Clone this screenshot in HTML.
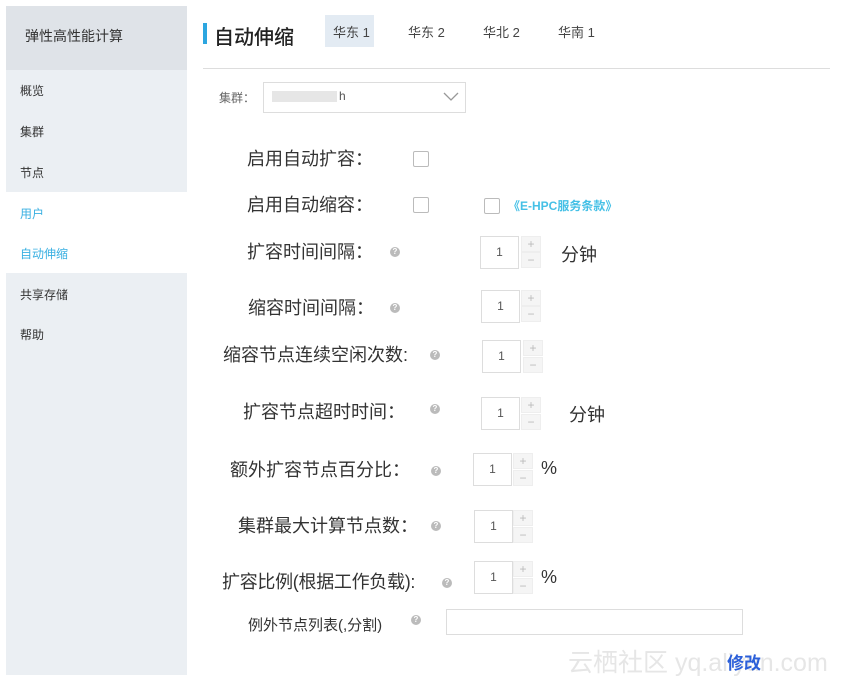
<!DOCTYPE html>
<html><head><meta charset="utf-8"><style>
*{margin:0;padding:0;box-sizing:border-box}
body{width:864px;height:681px;background:#fff;position:relative;overflow:hidden;font-family:"Liberation Sans","Noto Sans CJK SC",sans-serif;color:#333}
.a{position:absolute;white-space:nowrap}
.lbl{font-size:18px;color:#333;line-height:20px}
.q{position:absolute;width:10px;height:10px;border-radius:50%;background:#bbb;color:#fff;font-size:8px;line-height:10px;text-align:center;font-weight:bold}
.inp{position:absolute;width:39px;height:33px;border:1px solid #ddd;font-size:12px;text-align:center;color:#555;background:#fff}
.pm{position:absolute;width:20px;height:16px;background:#f5f5f5;border:1px solid #eee;color:#bbb;font-size:12px;line-height:14px;text-align:center}
.cb{position:absolute;width:16px;height:16px;border:1px solid #bbb;border-radius:2px;background:#fff}
.side div{position:absolute;left:20px;font-size:12px;color:#333}
</style></head><body>
<div class="a" style="left:6px;top:6px;width:181px;height:64px;background:#dfe3e8"></div>
<div class="a" style="left:6px;top:70px;width:181px;height:122px;background:#ebeff3"></div>
<div class="a" style="left:6px;top:273px;width:181px;height:402px;background:#ebeff3"></div>
<div class="a" style="left:25px;top:26px;font-size:14px;color:#333">弹性高性能计算</div>
<div class="side">
<div style="top:82px">概览</div>
<div style="top:123px">集群</div>
<div style="top:164px">节点</div>
<div style="top:205px;color:#3ab0e2">用户</div>
<div style="top:245px;color:#3ab0e2">自动伸缩</div>
<div style="top:286px">共享存储</div>
<div style="top:326px">帮助</div>
</div>
<div class="a" style="left:203px;top:23px;width:4px;height:21px;background:#2ca6e0"></div>
<div class="a" style="left:214px;top:21px;font-size:20px;color:#222;font-weight:500">自动伸缩</div>
<div class="a" style="left:325px;top:15px;width:49px;height:32px;background:#e3ebf3"></div>
<div class="a" style="left:333px;top:22px;font-size:13px;color:#444">华东 1</div>
<div class="a" style="left:408px;top:22px;font-size:13px;color:#444">华东 2</div>
<div class="a" style="left:483px;top:22px;font-size:13px;color:#444">华北 2</div>
<div class="a" style="left:558px;top:22px;font-size:13px;color:#444">华南 1</div>
<div class="a" style="left:203px;top:68px;width:627px;height:1px;background:#ddd"></div>
<div class="a" style="left:219px;top:89px;font-size:12px;color:#666">集群：</div>
<div class="a" style="left:263px;top:82px;width:203px;height:31px;border:1px solid #ddd"></div>
<div class="a" style="left:272px;top:91px;width:65px;height:11px;background:#e6e6e6"></div>
<div class="a" style="left:339px;top:89px;font-size:12px;color:#555">h</div>
<svg class="a" style="left:442px;top:90px" width="18" height="12"><path d="M2 3 L9 10 L16 3" fill="none" stroke="#999" stroke-width="1.3"/></svg>

<div class="a lbl" style="left:247px;top:149px">启用自动扩容：</div>
<div class="cb" style="left:413px;top:151px"></div>
<div class="a lbl" style="left:247px;top:195px">启用自动缩容：</div>
<div class="cb" style="left:413px;top:197px"></div>
<div class="cb" style="left:484px;top:198px"></div>
<div class="a" style="left:508px;top:197px;font-size:12px;font-weight:bold;color:#45c0e6">《E-HPC服务条款》</div>

<div class="a lbl" style="left:247px;top:242px">扩容时间间隔：</div><div class="q" style="left:390px;top:247px">?</div>
<div class="inp" style="left:480px;top:236px;line-height:31px">1</div><div class="pm" style="left:521px;top:236px">+</div><div class="pm" style="left:521px;top:252px">−</div>
<div class="a" style="left:561px;top:241px;font-size:18px">分钟</div>

<div class="a lbl" style="left:248px;top:298px">缩容时间间隔：</div><div class="q" style="left:390px;top:303px">?</div>
<div class="inp" style="left:481px;top:290px;line-height:31px">1</div><div class="pm" style="left:521px;top:290px">+</div><div class="pm" style="left:521px;top:306px">−</div>

<div class="a lbl" style="left:223px;top:345px">缩容节点连续空闲次数:</div><div class="q" style="left:430px;top:350px">?</div>
<div class="inp" style="left:482px;top:340px;line-height:31px">1</div><div class="pm" style="left:523px;top:340px">+</div><div class="pm" style="left:523px;top:357px">−</div>

<div class="a lbl" style="left:243px;top:402px">扩容节点超时时间：</div><div class="q" style="left:430px;top:404px">?</div>
<div class="inp" style="left:481px;top:397px;line-height:31px">1</div><div class="pm" style="left:521px;top:397px">+</div><div class="pm" style="left:521px;top:414px">−</div>
<div class="a" style="left:569px;top:401px;font-size:18px">分钟</div>

<div class="a lbl" style="left:230px;top:460px">额外扩容节点百分比：</div><div class="q" style="left:431px;top:466px">?</div>
<div class="inp" style="left:473px;top:453px;line-height:31px">1</div><div class="pm" style="left:513px;top:453px">+</div><div class="pm" style="left:513px;top:470px">−</div>
<div class="a" style="left:541px;top:458px;font-size:18px">%</div>

<div class="a lbl" style="left:238px;top:516px">集群最大计算节点数：</div><div class="q" style="left:431px;top:521px">?</div>
<div class="inp" style="left:474px;top:510px;line-height:31px">1</div><div class="pm" style="left:513px;top:510px">+</div><div class="pm" style="left:513px;top:527px">−</div>

<div class="a lbl" style="left:222px;top:572px;letter-spacing:-0.3px">扩容比例(根据工作负载):</div><div class="q" style="left:442px;top:578px">?</div>
<div class="inp" style="left:474px;top:561px;line-height:31px">1</div><div class="pm" style="left:513px;top:561px">+</div><div class="pm" style="left:513px;top:578px">−</div>
<div class="a" style="left:541px;top:567px;font-size:18px">%</div>

<div class="a" style="left:248px;top:614px;font-size:15px">例外节点列表(,分割)</div><div class="q" style="left:411px;top:615px">?</div>
<div class="a" style="left:446px;top:609px;width:297px;height:26px;border:1px solid #ddd"></div>

<div class="a" style="left:568px;top:643px;font-size:25px;color:#e6e6e6">云栖社区 yq.aliyun.com</div>
<div class="a" style="left:727px;top:649px;font-size:17px;font-weight:bold;color:#2b5fd9">修改</div>
</body></html>
